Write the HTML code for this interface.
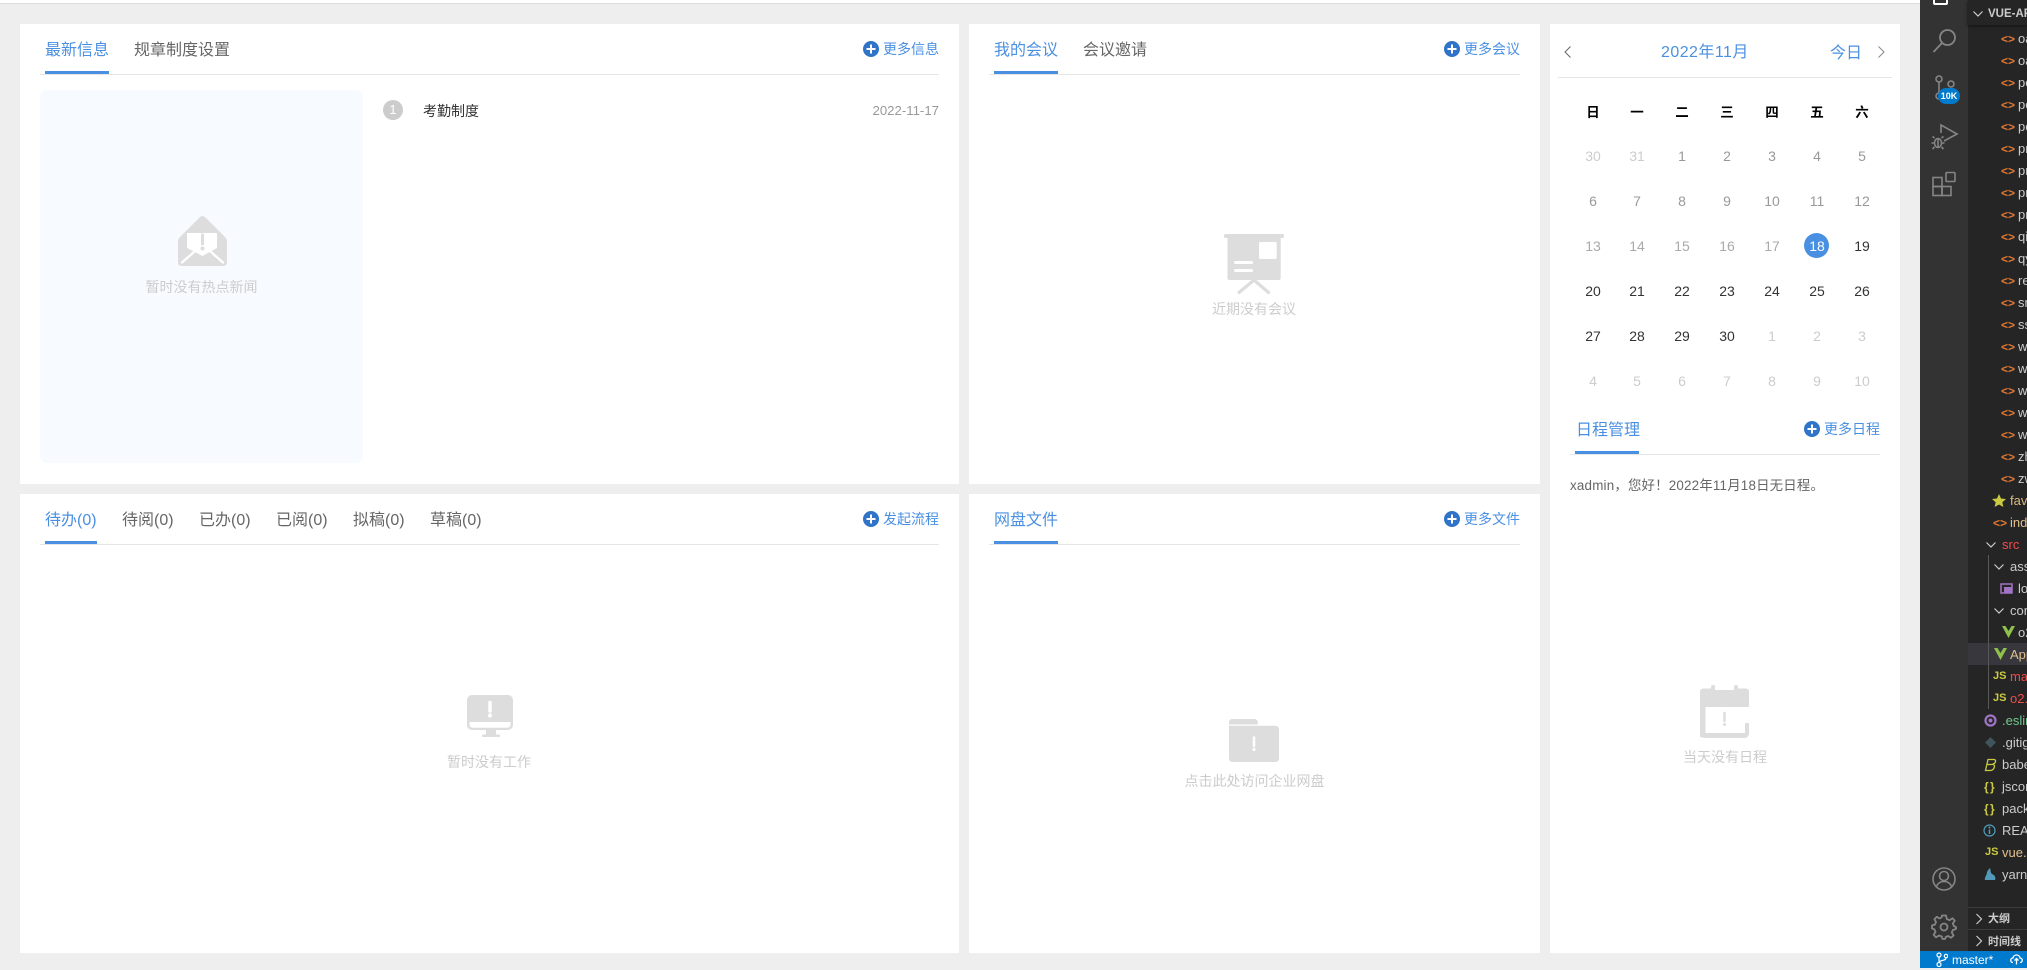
<!DOCTYPE html>
<html><head><meta charset="utf-8"><style>
html,body{margin:0;padding:0;width:2027px;height:968px;overflow:hidden;background:#eee;font-family:"Liberation Sans","Noto Sans CJK SC",sans-serif}
.a{position:absolute}
.t{position:absolute;white-space:nowrap;line-height:20px;height:20px}
.p{position:absolute;background:#fff}
.rule{position:absolute;height:1px;background:#e6e6e6}
.ul{position:absolute;height:3px;background:#4a90e2}
.tab{font-size:16px;color:#666}
.on{color:#4a90e2}
.more{font-size:14px;color:#4a90e2}
.em{font-size:14px;color:#ccc;text-align:center}
.d{position:absolute;width:44px;text-align:center;font-size:14px;line-height:20px;height:20px}
.w{font-weight:bold;color:#000;font-size:13.5px}
.g1{color:#ccc}.g2{color:#999}.g3{color:#aaa}.k{color:#333}
.f{position:absolute;white-space:nowrap;font-size:13px;line-height:22px;height:22px;color:#ccc;font-family:"Liberation Sans",sans-serif}
.h{color:#e37933;font-size:12px;font-weight:bold}
.js{color:#cbcb41;font-size:11px;font-weight:bold}
.br{color:#cbcb41;font-size:12px;font-weight:bold;letter-spacing:-1px}
.r{color:#f14c4c}.o{color:#e2c08d}.gr{color:#73c991}
svg{position:absolute;display:block}
</style></head><body>
<div class="a" style="left:0;top:0;width:1920px;height:3px;background:#fff"></div>
<div class="a" style="left:0;top:3px;width:1920px;height:1px;background:#ddd"></div>

<div class="p" style="left:20px;top:24px;width:939px;height:460px"></div>
<div class="p" style="left:969px;top:24px;width:571px;height:460px"></div>
<div class="p" style="left:1550px;top:24px;width:350px;height:929px"></div>
<div class="p" style="left:20px;top:494px;width:939px;height:459px"></div>
<div class="p" style="left:969px;top:494px;width:571px;height:459px"></div>

<!-- panel 1 -->
<div class="t tab on" style="left:45px;top:41px">最新信息</div>
<div class="t tab" style="left:134px;top:41px">规章制度设置</div>
<div class="rule" style="left:40px;top:74px;width:899px"></div>
<div class="ul" style="left:45px;top:71px;width:64px"></div>
<svg style="left:863px;top:41px" width="16" height="16"><circle cx="8" cy="8" r="8" fill="#2f74c8"/><path d="M8 3.5v9M3.5 8h9" stroke="#fff" stroke-width="2"/></svg>
<div class="t more" style="left:883px;top:39px">更多信息</div>
<div class="a" style="left:40px;top:90px;width:323px;height:373px;background:#f7faff;border-radius:7px"></div>
<svg style="left:178px;top:216px" width="49" height="50" viewBox="0 0 49 50"><path d="M24.5 0Q26 0 28 2L47 21Q49 23 49 26V46Q49 50 45 50H4Q0 50 0 46V26Q0 23 2 21L21 2Q23 0 24.5 0Z" fill="#ddd"/><path d="M9 17H39V32L24.5 40L9 32Z" fill="#fff"/><path d="M24.5 19V28" stroke="#ddd" stroke-width="3" stroke-linecap="round"/><circle cx="24.5" cy="32.5" r="2" fill="#ddd"/><path d="M4 46.5L16 36M45 46.5L33 36" stroke="#fff" stroke-width="2.4" stroke-linecap="round"/></svg>
<div class="t em" style="left:145px;top:277px;width:113px">暂时没有热点新闻</div>
<div class="a" style="left:383px;top:100px;width:20px;height:20px;border-radius:50%;background:#ccc;color:#fff;font-size:13px;line-height:20px;text-align:center">1</div>
<div class="t" style="left:423px;top:101px;font-size:14px;color:#333">考勤制度</div>
<div class="t" style="right:1088px;top:101px;font-size:13.2px;color:#999">2022-11-17</div>

<!-- panel 2 -->
<div class="t tab on" style="left:994px;top:41px">我的会议</div>
<div class="t tab" style="left:1083px;top:41px">会议邀请</div>
<div class="rule" style="left:989px;top:74px;width:531px"></div>
<div class="ul" style="left:994px;top:71px;width:64px"></div>
<svg style="left:1444px;top:41px" width="16" height="16"><circle cx="8" cy="8" r="8" fill="#2f74c8"/><path d="M8 3.5v9M3.5 8h9" stroke="#fff" stroke-width="2"/></svg>
<div class="t more" style="left:1464px;top:39px">更多会议</div>
<svg style="left:1224px;top:234px" width="60" height="60" viewBox="0 0 60 60"><rect width="60" height="4" rx="1.5" fill="#ddd"/><path d="M3.5 3H56.7V44Q56.7 46 54.7 46H5.5Q3.5 46 3.5 44Z" fill="#ddd"/><rect x="35" y="8" width="17.7" height="17" rx="1.5" fill="#fff"/><rect x="10" y="27" width="19" height="3" rx="1.5" fill="#fff"/><rect x="10" y="35" width="19" height="3" rx="1.5" fill="#fff"/><path d="M30 46L15 58.5M30 46L44.5 58.5" stroke="#ddd" stroke-width="3.2" stroke-linecap="round"/></svg>
<div class="t em" style="left:1212px;top:299px;width:84px">近期没有会议</div>

<!-- calendar -->
<svg style="left:1563px;top:45px" width="10" height="14"><path d="M7.5 1.5L2 7l5.5 5.5" fill="none" stroke="#666" stroke-width="1"/></svg>
<div class="t" style="left:1661px;top:43px;font-size:16px;letter-spacing:.45px;color:#4a90e2">2022年11月</div>
<div class="t" style="left:1830px;top:44px;font-size:16px;color:#4a90e2">今日</div>
<svg style="left:1876px;top:45px" width="10" height="14"><path d="M2.500 1.5L8 7l-5.500 5.500" fill="none" stroke="#888" stroke-width="1"/></svg>
<div class="rule" style="left:1558px;top:77px;width:334px"></div>

<div class="d w" style="left:1571px;top:103px">日</div><div class="d w" style="left:1615px;top:103px">一</div><div class="d w" style="left:1660px;top:103px">二</div><div class="d w" style="left:1705px;top:103px">三</div><div class="d w" style="left:1750px;top:103px">四</div><div class="d w" style="left:1795px;top:103px">五</div><div class="d w" style="left:1840px;top:103px">六</div>

<div class="d g1" style="left:1571px;top:146px">30</div><div class="d g1" style="left:1615px;top:146px">31</div><div class="d g2" style="left:1660px;top:146px">1</div><div class="d g2" style="left:1705px;top:146px">2</div><div class="d g2" style="left:1750px;top:146px">3</div><div class="d g2" style="left:1795px;top:146px">4</div><div class="d g2" style="left:1840px;top:146px">5</div>

<div class="d g2" style="left:1571px;top:191px">6</div><div class="d g2" style="left:1615px;top:191px">7</div><div class="d g2" style="left:1660px;top:191px">8</div><div class="d g2" style="left:1705px;top:191px">9</div><div class="d g2" style="left:1750px;top:191px">10</div><div class="d g2" style="left:1795px;top:191px">11</div><div class="d g2" style="left:1840px;top:191px">12</div>

<div class="d g3" style="left:1571px;top:236px">13</div><div class="d g3" style="left:1615px;top:236px">14</div><div class="d g3" style="left:1660px;top:236px">15</div><div class="d g3" style="left:1705px;top:236px">16</div><div class="d g3" style="left:1750px;top:236px">17</div>
<div class="a" style="left:1804px;top:233px;width:25px;height:25px;border-radius:50%;background:#4a90e2"></div>
<div class="d" style="left:1795px;top:236px;color:#fff">18</div><div class="d k" style="left:1840px;top:236px">19</div>

<div class="d k" style="left:1571px;top:281px">20</div><div class="d k" style="left:1615px;top:281px">21</div><div class="d k" style="left:1660px;top:281px">22</div><div class="d k" style="left:1705px;top:281px">23</div><div class="d k" style="left:1750px;top:281px">24</div><div class="d k" style="left:1795px;top:281px">25</div><div class="d k" style="left:1840px;top:281px">26</div>

<div class="d k" style="left:1571px;top:326px">27</div><div class="d k" style="left:1615px;top:326px">28</div><div class="d k" style="left:1660px;top:326px">29</div><div class="d k" style="left:1705px;top:326px">30</div><div class="d g1" style="left:1750px;top:326px">1</div><div class="d g1" style="left:1795px;top:326px">2</div><div class="d g1" style="left:1840px;top:326px">3</div>

<div class="d g1" style="left:1571px;top:371px">4</div><div class="d g1" style="left:1615px;top:371px">5</div><div class="d g1" style="left:1660px;top:371px">6</div><div class="d g1" style="left:1705px;top:371px">7</div><div class="d g1" style="left:1750px;top:371px">8</div><div class="d g1" style="left:1795px;top:371px">9</div><div class="d g1" style="left:1840px;top:371px">10</div>

<div class="t tab on" style="left:1576px;top:421px">日程管理</div>
<div class="rule" style="left:1570px;top:454px;width:310px"></div>
<div class="ul" style="left:1575px;top:451px;width:64px"></div>
<svg style="left:1804px;top:421px" width="16" height="16"><circle cx="8" cy="8" r="8" fill="#2f74c8"/><path d="M8 3.5v9M3.5 8h9" stroke="#fff" stroke-width="2"/></svg>
<div class="t more" style="left:1824px;top:419px">更多日程</div>
<div class="t" style="left:1570px;top:476px;font-size:13.4px;letter-spacing:.2px;color:#666">xadmin，您好！2022年11月18日无日程。</div>
<svg style="left:1700px;top:685px" width="49" height="53" viewBox="0 0 49 53"><path d="M0 7Q0 3.500 3.500 3.500H11V1.500Q11 0 13 0T15 1.500V5H34V1.500Q34 0 36 0T38 1.500V3.500H45.500Q49 3.500 49 7V22H49V37H45V52H0Z" fill="#ddd"/><path d="M0 46H5V51H0Z" fill="#ddd"/><rect x="5.500" y="22" width="43.500" height="26" fill="#fff"/><path d="M0 22H5.500V48H45V38H49V48Q49 53 44 53H5Q0 53 0 48Z" fill="#ddd"/><path d="M24.500 28V36" stroke="#ddd" stroke-width="2.500" stroke-linecap="round"/><circle cx="24.500" cy="39.500" r="1.500" fill="#ddd"/></svg>
<div class="t em" style="left:1683px;top:747px;width:84px">当天没有日程</div>

<!-- lower left -->
<div class="t tab on" style="left:45px;top:511px">待办(0)</div>
<div class="t tab" style="left:122px;top:511px">待阅(0)</div>
<div class="t tab" style="left:199px;top:511px">已办(0)</div>
<div class="t tab" style="left:276px;top:511px">已阅(0)</div>
<div class="t tab" style="left:353px;top:511px">拟稿(0)</div>
<div class="t tab" style="left:430px;top:511px">草稿(0)</div>
<div class="rule" style="left:40px;top:544px;width:899px"></div>
<div class="ul" style="left:45px;top:541px;width:52px"></div>
<svg style="left:863px;top:511px" width="16" height="16"><circle cx="8" cy="8" r="8" fill="#2f74c8"/><path d="M8 3.5v9M3.5 8h9" stroke="#fff" stroke-width="2"/></svg>
<div class="t more" style="left:883px;top:509px">发起流程</div>
<svg style="left:467px;top:695px" width="46" height="42" viewBox="0 0 46 42"><rect width="46" height="35" rx="5" fill="#ddd"/><path d="M2.500 27H43.500V29Q43.500 32.700 40 32.700H6Q2.500 32.700 2.500 29Z" fill="#fff"/><path d="M23 7.500V16" stroke="#fff" stroke-width="3.500" stroke-linecap="round"/><circle cx="23" cy="20.500" r="2" fill="#fff"/><rect x="19" y="35" width="10" height="5" fill="#ddd"/><rect x="15" y="39.500" width="18" height="2.500" rx="1" fill="#ddd"/></svg>
<div class="t em" style="left:447px;top:752px;width:84px">暂时没有工作</div>

<!-- lower mid -->
<div class="t tab on" style="left:994px;top:511px">网盘文件</div>
<div class="rule" style="left:989px;top:544px;width:531px"></div>
<div class="ul" style="left:994px;top:541px;width:64px"></div>
<svg style="left:1444px;top:511px" width="16" height="16"><circle cx="8" cy="8" r="8" fill="#2f74c8"/><path d="M8 3.5v9M3.5 8h9" stroke="#fff" stroke-width="2"/></svg>
<div class="t more" style="left:1464px;top:509px">更多文件</div>
<svg style="left:1229px;top:719px" width="50" height="43" viewBox="0 0 50 43"><path d="M0 5.500V3.500Q0 0 3.500 0H25.500Q29 0 29 5.500Z" fill="#ddd"/><path d="M0 6.700H46Q50 6.700 50 10.700V39Q50 43 46 43H4Q0 43 0 39Z" fill="#ddd"/><path d="M25 18.500V27" stroke="#fff" stroke-width="2.500" stroke-linecap="round"/><circle cx="25" cy="30.500" r="1.600" fill="#fff"/></svg>
<div class="t em" style="left:1184px;top:771px;width:141px">点击此处访问企业网盘</div>

<!-- VS Code -->
<div class="a" style="left:1920px;top:0;width:2px;height:16px;background:#fff"></div>
<div class="a" style="left:1920px;top:0;width:48px;height:951px;background:#333"></div>
<div class="a" style="left:1968px;top:0;width:59px;height:951px;background:#252526;overflow:hidden"></div>
<div class="a" style="left:1968px;top:0;width:59px;height:25px;background:#252526;box-shadow:0 1px 3px #111"></div>
<div class="a" style="left:1933px;top:-10px;width:11px;height:11px;border:2px solid #fff;border-radius:2px"></div>

<svg style="left:1932px;top:27px" width="26" height="26" fill="none" stroke="#858585" stroke-width="1.800"><circle cx="15.500" cy="10.500" r="7.500"/><path d="M10 16L1.500 25"/></svg>
<svg style="left:1934px;top:75px" width="24" height="26" fill="none" stroke="#858585" stroke-width="1.600"><circle cx="5" cy="4" r="3"/><circle cx="17" cy="9" r="3"/><circle cx="5" cy="21" r="3"/><path d="M5 7V18"/></svg>
<div class="a" style="left:1938px;top:88px;width:22px;height:16px;border-radius:8px;background:#007acc;color:#fff;font-size:9px;font-weight:bold;line-height:16px;text-align:center">10K</div>
<svg style="left:1931px;top:123px" width="28" height="27" fill="none" stroke="#858585" stroke-width="1.600"><path d="M10 10V2L26 11L13 18"/><ellipse cx="7" cy="20" rx="3.500" ry="4.500"/><path d="M7 15.500V24.500M3.500 15L1.500 13.500M10.500 15L12.500 13.500M3 20H0.500M11 20H13.500M3.500 24L1.500 26M10.500 24L12.500 26"/></svg>
<svg style="left:1931px;top:171px" width="27" height="27" fill="none" stroke="#858585" stroke-width="1.600"><rect x="2" y="6.500" width="9" height="9"/><rect x="2" y="15.500" width="9" height="9"/><rect x="11" y="15.500" width="9" height="9"/><rect x="15" y="1.500" width="9" height="9" rx="1"/></svg>
<svg style="left:1932px;top:867px" width="24" height="24" fill="none" stroke="#858585" stroke-width="1.600"><circle cx="12" cy="12" r="11"/><circle cx="12" cy="9" r="4.500"/><path d="M4.500 19.500C6 15.500 9 14.500 12 14.500S18 15.500 19.500 19.500"/></svg>
<svg style="left:1931px;top:914px" width="26" height="26" viewBox="0 0 26 26" fill="none" stroke="#858585" stroke-width="1.800"><circle cx="13" cy="13" r="3.500"/><path d="M11 1.500H15L15.800 5L18.500 6.200L21.500 4.200L23.800 6.600L21.800 9.500L23 12.200L25 13V15L21.800 16L20.800 18.500L22.600 21.500L20 23.800L17.200 22L14.800 23L14 25H11.500L10.800 22.500L8 21.500L5 23.300L2.600 20.800L4.500 18L3.400 15.300L1 14.500V11.500L4 10.500L5 8L3.400 5.200L5.800 2.800L8.500 4.500L10.500 3.500Z" stroke-linejoin="round"/></svg>

<svg style="left:1973px;top:10px" width="10" height="8" fill="none" stroke="#ccc" stroke-width="1.200"><path d="M0.500 1.500L5 6L9.500 1.500"/></svg>
<div class="t" style="left:1988px;top:4px;font-size:11.5px;font-weight:bold;color:#ccc;width:39px;overflow:hidden">VUE-APP</div>

<!-- file rows -->
<div id="files" class="a" style="left:1968px;top:0;width:59px;height:951px;overflow:hidden">
<div class="a" style="left:0;top:643px;width:59px;height:22px;background:#37373d"></div>
<div class="a" style="left:20px;top:555px;width:1px;height:154px;background:#585858"></div>
<div class="a" style="left:0;top:907px;width:59px;height:1px;background:#3c3c3c"></div>
<div class="a" style="left:0;top:929px;width:59px;height:1px;background:#3c3c3c"></div>

<!-- html rows -->
<div class="f h" style="left:33px;top:28px">&lt;&gt;</div><div class="f" style="left:50px;top:28px">oa.html</div>
<div class="f h" style="left:33px;top:50px">&lt;&gt;</div><div class="f" style="left:50px;top:50px">oa2.html</div>
<div class="f h" style="left:33px;top:72px">&lt;&gt;</div><div class="f" style="left:50px;top:72px">pe.html</div>
<div class="f h" style="left:33px;top:94px">&lt;&gt;</div><div class="f" style="left:50px;top:94px">pe2.html</div>
<div class="f h" style="left:33px;top:116px">&lt;&gt;</div><div class="f" style="left:50px;top:116px">pe3.html</div>
<div class="f h" style="left:33px;top:138px">&lt;&gt;</div><div class="f" style="left:50px;top:138px">pr.html</div>
<div class="f h" style="left:33px;top:160px">&lt;&gt;</div><div class="f" style="left:50px;top:160px">pr2.html</div>
<div class="f h" style="left:33px;top:182px">&lt;&gt;</div><div class="f" style="left:50px;top:182px">pr3.html</div>
<div class="f h" style="left:33px;top:204px">&lt;&gt;</div><div class="f" style="left:50px;top:204px">pr4.html</div>
<div class="f h" style="left:33px;top:226px">&lt;&gt;</div><div class="f" style="left:50px;top:226px">qi.html</div>
<div class="f h" style="left:33px;top:248px">&lt;&gt;</div><div class="f" style="left:50px;top:248px">qy.html</div>
<div class="f h" style="left:33px;top:270px">&lt;&gt;</div><div class="f" style="left:50px;top:270px">re.html</div>
<div class="f h" style="left:33px;top:292px">&lt;&gt;</div><div class="f" style="left:50px;top:292px">sm.html</div>
<div class="f h" style="left:33px;top:314px">&lt;&gt;</div><div class="f" style="left:50px;top:314px">ss.html</div>
<div class="f h" style="left:33px;top:336px">&lt;&gt;</div><div class="f" style="left:50px;top:336px">w1.html</div>
<div class="f h" style="left:33px;top:358px">&lt;&gt;</div><div class="f" style="left:50px;top:358px">w2.html</div>
<div class="f h" style="left:33px;top:380px">&lt;&gt;</div><div class="f" style="left:50px;top:380px">w3.html</div>
<div class="f h" style="left:33px;top:402px">&lt;&gt;</div><div class="f" style="left:50px;top:402px">w4.html</div>
<div class="f h" style="left:33px;top:424px">&lt;&gt;</div><div class="f" style="left:50px;top:424px">w5.html</div>
<div class="f h" style="left:33px;top:446px">&lt;&gt;</div><div class="f" style="left:50px;top:446px">zh.html</div>
<div class="f h" style="left:33px;top:468px">&lt;&gt;</div><div class="f" style="left:50px;top:468px">zw.html</div>

<svg style="left:24px;top:494px" width="14" height="13"><path d="M7 0L9 4.500L14 5L10.300 8.200L11.400 13L7 10.500L2.600 13L3.700 8.200L0 5L5 4.500Z" fill="#cbcb41"/></svg><div class="f" style="left:42px;top:490px;color:#d7ba7d">favicon.ico</div>
<div class="f h" style="left:25px;top:512px">&lt;&gt;</div><div class="f" style="left:42px;top:512px;color:#e2c08d">index.html</div>
<svg style="left:18px;top:541px" width="10" height="8" fill="none" stroke="#ccc" stroke-width="1.200"><path d="M0.500 1.500L5 6L9.500 1.500"/></svg>
<div class="f r" style="left:34px;top:534px">src</div>
<svg style="left:26px;top:563px" width="10" height="8" fill="none" stroke="#ccc" stroke-width="1.200"><path d="M0.500 1.500L5 6L9.500 1.500"/></svg>
<div class="f" style="left:42px;top:556px">assets</div>
<svg style="left:32px;top:583px" width="13" height="11"><rect x="1" y="1" width="11" height="9" fill="none" stroke="#a074c4" stroke-width="1.500"/><rect x="4" y="4" width="8" height="6" fill="#a074c4"/></svg>
<div class="f" style="left:50px;top:578px">logo.png</div>
<svg style="left:26px;top:607px" width="10" height="8" fill="none" stroke="#ccc" stroke-width="1.200"><path d="M0.500 1.500L5 6L9.500 1.500"/></svg>
<div class="f" style="left:42px;top:600px">components</div>
<svg style="left:34px;top:626px" width="13" height="12"><path d="M0 0H3.500L6.500 5L9.500 0H13L6.500 12Z" fill="#8dc149"/></svg>
<div class="f" style="left:50px;top:622px">o2.vue</div>
<svg style="left:26px;top:648px" width="13" height="12"><path d="M0 0H3.500L6.500 5L9.500 0H13L6.500 12Z" fill="#8dc149"/></svg>
<div class="f o" style="left:42px;top:644px">App.vue</div>
<div class="f js" style="left:25px;top:665px">JS</div><div class="f r" style="left:42px;top:666px">main.js</div>
<div class="f js" style="left:25px;top:687px">JS</div><div class="f r" style="left:42px;top:688px">o2.js</div>
<svg style="left:16px;top:714px" width="13" height="13"><circle cx="6.500" cy="6.500" r="5" fill="none" stroke="#a074c4" stroke-width="2.200"/><circle cx="6.500" cy="6.500" r="2" fill="#a074c4"/></svg>
<div class="f gr" style="left:34px;top:710px">.eslintrc.js</div>
<svg style="left:17px;top:737px" width="11" height="11"><path d="M5.500 0L11 5.500L5.500 11L0 5.500Z" fill="#41535b"/></svg>
<div class="f" style="left:34px;top:732px">.gitignore</div>
<svg style="left:16px;top:758px" width="13" height="14" fill="none" stroke="#cbcb41" stroke-width="1.300"><path d="M4 1.500H10C12.500 1.500 12 5.500 8.500 6.200C12 6.500 10.500 12 6.500 12.500H1.500L4 1.500ZM3 6.500H8.500"/></svg>
<div class="f" style="left:34px;top:754px">babel.config.js</div>
<div class="f br" style="left:16px;top:776px">{ }</div><div class="f" style="left:34px;top:776px">jsconfig.json</div>
<div class="f br" style="left:16px;top:798px">{ }</div><div class="f" style="left:34px;top:798px">package.json</div>
<svg style="left:15px;top:824px" width="13" height="13"><circle cx="6.500" cy="6.500" r="5.500" fill="none" stroke="#519aba" stroke-width="1.200"/><path d="M6.500 5.500V10" stroke="#519aba" stroke-width="1.500"/><circle cx="6.500" cy="3.500" r="1" fill="#519aba"/></svg>
<div class="f" style="left:34px;top:820px">README.md</div>
<div class="f js" style="left:17px;top:841px">JS</div><div class="f o" style="left:34px;top:842px">vue.config.js</div>
<svg style="left:16px;top:868px" width="12" height="13"><path d="M6 0C7 3 6 4 8 6C11 7 12 10 11 12H1C0 10 3 7 3 4C4 2 5 1 6 0Z" fill="#519aba"/></svg>
<div class="f" style="left:34px;top:864px">yarn.lock</div>

<svg style="left:7px;top:913px" width="8" height="12" fill="none" stroke="#ccc" stroke-width="1.200"><path d="M1.500 1L6.500 6L1.500 11"/></svg>
<div class="f" style="left:20px;top:908px;font-size:11px;font-weight:bold;font-family:'Liberation Sans','Noto Sans CJK SC',sans-serif">大纲</div>
<svg style="left:7px;top:935px" width="8" height="12" fill="none" stroke="#ccc" stroke-width="1.200"><path d="M1.500 1L6.500 6L1.500 11"/></svg>
<div class="f" style="left:20px;top:931px;font-size:11px;font-weight:bold;font-family:'Liberation Sans','Noto Sans CJK SC',sans-serif">时间线</div>
</div>

<!-- status bar -->
<div class="a" style="left:1920px;top:951px;width:107px;height:17px;background:#007acc"></div>
<svg style="left:1936px;top:952px" width="12" height="15" fill="none" stroke="#fff" stroke-width="1.200"><circle cx="3" cy="3" r="2"/><circle cx="3" cy="12.500" r="2"/><circle cx="10" cy="4" r="1.700"/><path d="M3 5V10.500M10 6C10 9 3 8 3 10.500"/></svg>
<div class="t" style="left:1952px;top:950px;font-size:12px;color:#fff">master*</div>
<svg style="left:2010px;top:953px" width="13" height="12" fill="none" stroke="#fff" stroke-width="1.300"><path d="M3 9.500C0 9.500 0 5 3 5C3.500 1 9.500 1 10 5C13 5 13 9.500 10 9.500M6.500 11.500V5.500M4.500 7.500L6.500 5.500L8.500 7.500"/></svg>
</body></html>
